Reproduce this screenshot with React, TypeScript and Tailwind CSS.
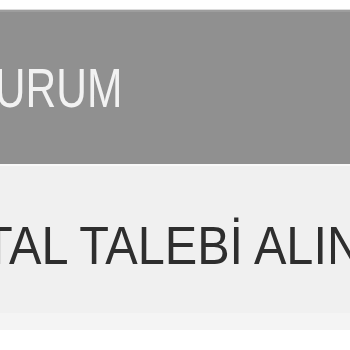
import React from "react";

export default function App() {
  return (
    <div className="w-[350px] h-[350px] overflow-hidden bg-white" style={{ fontFamily: '"Liberation Sans", Arial, sans-serif' }}>
      <div className="h-[9px] bg-white" />
      <div className="h-px bg-[#dcdcdc]" />
      <div className="h-[2px] bg-[#9d9d9d]" />
      <div className="h-[152px] bg-[#909090] flex items-center overflow-hidden whitespace-nowrap">
        <span className="ml-[-36px] text-[56px] leading-none text-[#f2f2f2] origin-left scale-x-[0.76] inline-block">DURUM</span>
      </div>
      <div className="h-[2px] bg-[#f8f8f8]" />
      <div className="h-[147px] bg-[#f0f0f0] flex items-center overflow-hidden whitespace-nowrap pt-[10px]">
        <span className="ml-[-63px] text-[54px] leading-none text-[#2e2e2e] origin-left scale-x-[0.9] inline-block">İPTAL TALEBİ ALINDI</span>
      </div>
      <div className="h-[17px] bg-[#f4f4f4]" />
      <div className="flex-1 bg-white" />
    </div>
  );
}
